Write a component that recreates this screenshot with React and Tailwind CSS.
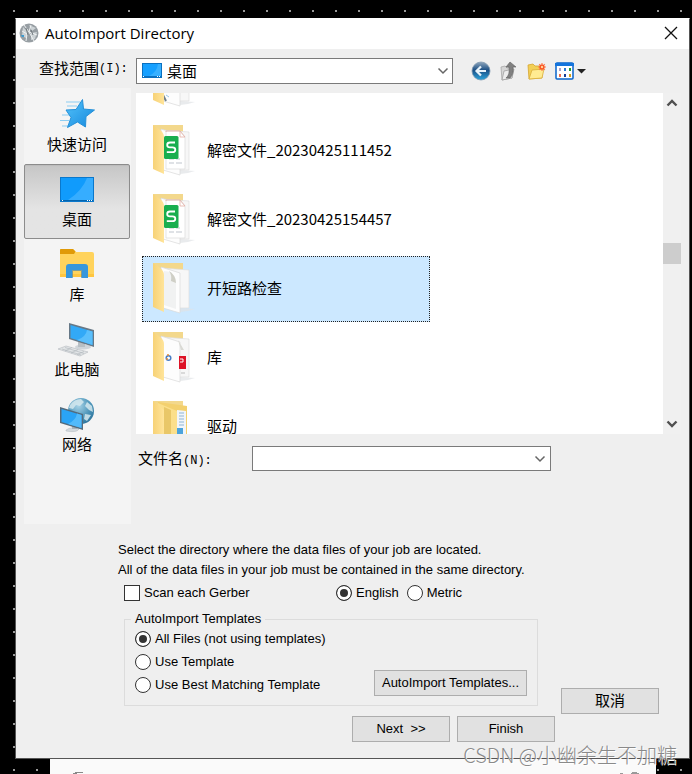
import { useState } from 'react';

const StarIcon = () => (
  <svg width="38" height="36" viewBox="0 0 38 36">
    <defs>
      <linearGradient id="star" x1="0" y1="0" x2="1" y2="1">
        <stop offset="0" stopColor="#55c4fb" />
        <stop offset="1" stopColor="#1487dc" />
      </linearGradient>
    </defs>
    <path d="M8 4H22M9 8H19M4 17H11M2 22.500H11M4 28H10" stroke="#8ccdf2" strokeWidth="1" />
    <path d="M24.500 1.500L25.500 11L36.500 12L28 18.500L27.500 29L19.500 24L9.500 29.500L13 19.500L8 12L18 11.500Z" fill="url(#star)" stroke="#2590d8" strokeWidth="1" strokeLinejoin="round" />
  </svg>
);

const DesktopIcon = () => (
  <svg width="38" height="36" viewBox="0 0 38 36">
    <rect x="2" y="4" width="34" height="25" fill="#0a78cc" />
    <rect x="3" y="5" width="32" height="22" fill="#109bfc" />
    <path d="M35 5V27H10Q24 18 29 5Z" fill="#36adff" />
    <rect x="3" y="27" width="32" height="1" fill="#0564ad" />
    <path d="M4 27.500H5M29 27.500H30M31 27.500H32M33 27.500H34" stroke="#fff" />
  </svg>
);

const LibraryIcon = () => (
  <svg width="38" height="36" viewBox="0 0 38 36">
    <path d="M2 2Q2 1 3 1H15L18 4H34Q36 4 36 6V29H2Z" fill="#ffd35c" />
    <path d="M2 2Q2 1 3 1H15L17.500 3.500L16 6H2Z" fill="#e09a08" />
    <path d="M2 26H36V29H2Z" fill="#ffc640" />
    <path d="M8 30V19Q8 16 11 16H27Q30 16 30 19V30H24V22H14V30Z" fill="#3797dc" />
    <path d="M14 30V22H24V30H23V23H15V30Z" fill="#2c79b9" opacity=".6" />
  </svg>
);

const ComputerIcon = () => (
  <svg width="38" height="36" viewBox="0 0 38 36">
    <ellipse cx="25" cy="24" rx="8" ry="2.500" fill="#cfd5da" />
    <path d="M20 18H27V24H20Z" fill="#b8bfc4" />
    <path d="M11 0L36 7V24L11 16Z" fill="#667887" />
    <path d="M12.500 2L34.500 8.500V22L12.500 15Z" fill="#32a9f7" />
    <path d="M34.500 8.500V22L19 17Q28 14 29 7Z" fill="#5abffc" />
    <path d="M0 26L8 23L30 29L22 33Z" fill="#e2e5e7" stroke="#b4b9bd" strokeWidth=".6" />
    <path d="M4 26L23 32M7 24.500L26 30.500M7 28L14 24.500M13 30L20 26.500M19 31.500L26 28.500" stroke="#adb3b8" strokeWidth=".6" />
  </svg>
);

const NetworkIcon = () => (
  <svg width="38" height="36" viewBox="0 0 38 36">
    <defs>
      <radialGradient id="globe" cx=".4" cy=".3" r=".8">
        <stop offset="0" stopColor="#a8d3e6" />
        <stop offset=".6" stopColor="#4a93b8" />
        <stop offset="1" stopColor="#286d95" />
      </radialGradient>
    </defs>
    <circle cx="23" cy="13" r="13" fill="url(#globe)" />
    <path d="M12 7Q16 1 23 1L26 4L22 8L18 7L15 11L11 10ZM29 4L34 8L35 14L31 12L27 8ZM27 16L33 17L29 23L26 21Z" fill="#d5e9ee" opacity=".85" />
    <path d="M8 32Q14 28 21 31Q19 35 8 33Z" fill="#d3d9dd" stroke="#b0b8be" strokeWidth=".5" />
    <path d="M14 26H19V31H14Z" fill="#a9b2b9" />
    <path d="M2 9L25 16V32L2 25Z" fill="#546b7c" />
    <path d="M3.500 11L23.500 17V30L3.500 24Z" fill="#2aa4f6" />
    <path d="M23.500 17V30L10 26Q18 22 19 15.500Z" fill="#52bafa" />
  </svg>
);

// Folder thumbnail, the type decides what sheet sticks out of it
const FolderThumb = ({ type }) => (
  <svg width="44" height="54" viewBox="0 0 44 54" className="shrink-0">
    <defs>
      <linearGradient id="flap" x1="0" y1="0" x2="1" y2="0">
        <stop offset="0" stopColor="#f7d277" />
        <stop offset="1" stopColor="#ffe49a" />
      </linearGradient>
    </defs>
    <path d="M28 47L43 48L36 50L28 51Z" fill="#dfe3e6" opacity=".7" />
    <path d="M1 2H31V40L10 45Z" fill="#f3d88c" />
    {type === 'nested' ? (
      <>
        <path d="M6 3L35 7V52H8Z" fill="#f3d06e" />
        <path d="M25 11L34 12V50H25Z" fill="#f1f5f9" />
        <path d="M27 14H32M27 17H32M27 20H32M27 23H32M27 26H32" stroke="#8fb5d6" />
        <path d="M25 29H31V42H25Z" fill="#4ba3dc" />
        <path d="M6 4L25 12V52H6Z" fill="#fbdf8b" />
        <path d="M12 8L19 11V52H12Z" fill="#e9c768" />
        <path d="M1 2L12 11V52L1 48Z" fill="url(#flap)" />
      </>
    ) : (
      <>
        <path d="M9 7L37 9V47H28L12 42Z" fill="#f7f7f7" stroke="#dedede" strokeWidth=".7" />
        <path d="M9 6L28 12V52L11 47Z" fill="#fdfdfd" stroke="#d8d8d8" strokeWidth=".7" />
      </>
    )}
    {type === 'sheet' && (
      <>
        <path d="M14 8H28L33 14V46H14Z" fill="#fff" stroke="#dadada" strokeWidth=".7" />
        <path d="M14 9V8H28L33 14M28 8V14H33" fill="none" stroke="#e4afa5" strokeWidth=".8" />
        <path d="M17 36H22M24 36H28M17 40H22M24 40H30" stroke="#d5d9de" strokeWidth="1.500" />
      </>
    )}
    {type === 'pages' && (
      <>
        <path d="M12 10L19 11L24 20V48L12 44Z" fill="#f1f2f2" />
        <path d="M17 10Q20 14 19 20L24 22Q24 14 17 10Z" fill="#cfcfc6" />
      </>
    )}
    {type === 'pdf' && (
      <>
        <path d="M27 26H34V39H27Z" fill="#dd1327" />
        <path d="M28 29H31V32H28" fill="none" stroke="#fff" />
        <path d="M29 43H33" stroke="#bbb" />
        <circle cx="16.500" cy="28" r="2.300" fill="none" stroke="#4a7ec4" strokeWidth="1.500" />
        <path d="M15 25H17M14 29H16" stroke="#e08a3a" strokeWidth="1.300" />
        <path d="M26 10L32 20L29 20Z" fill="#d9d9d4" />
      </>
    )}
    {type === 'mixed' && (
      <>
        <path d="M11 41L14 47" stroke="#71818b" strokeWidth="2" />
        <path d="M14 41L17 43" stroke="#9ac6e8" />
      </>
    )}
    {type !== 'nested' && <path d="M1 2L8 7Q12 10 12 14V51L1 46Z" fill="url(#flap)" />}
    {type === 'sheet' && (
      <>
        <rect x="12" y="13" width="14.500" height="23" rx="1.500" fill="#19ae4f" />
        <path d="M23 19.500H18Q15.200 19.500 15.200 21.900Q15.200 24.300 18 24.300H20.500Q23.300 24.300 23.300 26.700Q23.300 29.200 20.500 29.200H14.800" fill="none" stroke="#fff" strokeWidth="1.800" />
      </>
    )}
  </svg>
);

const BackIcon = () => (
  <svg width="20" height="20" viewBox="0 0 20 20">
    <defs>
      <linearGradient id="back" x1="0" y1="0" x2="0" y2="1">
        <stop offset="0" stopColor="#8ea5bb" />
        <stop offset=".45" stopColor="#1b4f85" />
        <stop offset="1" stopColor="#2ba4dc" />
      </linearGradient>
    </defs>
    <circle cx="10" cy="10" r="9" fill="url(#back)" stroke="#7d98b0" strokeWidth=".8" />
    <path d="M15 10H6M10 5.500L5.500 10L10 14.500" fill="none" stroke="#e8f3fa" strokeWidth="2.200" />
  </svg>
);

const UpIcon = () => (
  <svg width="20" height="20" viewBox="0 0 20 20">
    <path d="M2 6L6 5L8 7L13 6V17L3 19Z" fill="#d6d6d6" stroke="#a8a8a8" strokeWidth=".8" />
    <path d="M3 19L5 10L15 8L13 17Z" fill="#ececec" stroke="#a0a0a0" strokeWidth=".8" />
    <path d="M7 17Q11 14 10 6H7L11 1L17 6H14Q15 13 11 17Z" fill="#808080" stroke="#606060" strokeWidth=".6" />
  </svg>
);

const NewFolderIcon = () => (
  <svg width="20" height="20" viewBox="0 0 20 20">
    <path d="M1 4L6 3L8 5L15 5V17L2 18Z" fill="#f2cf55" stroke="#d5a52e" strokeWidth=".8" />
    <path d="M2 18L5 9L17 8L15 17Z" fill="#ffeb91" stroke="#d9ad39" strokeWidth=".8" />
    <path d="M15 2V10M11 6H19M12.200 3.200L17.800 8.800M17.800 3.200L12.200 8.800" stroke="#ff7d50" strokeWidth="1.200" />
    <circle cx="15" cy="6" r="2.600" fill="#fa5423" />
    <circle cx="15" cy="6" r="1.200" fill="#ffd39a" />
  </svg>
);

const ViewIcon = () => (
  <svg width="32" height="20" viewBox="0 0 32 20">
    <rect x="1" y="2" width="17" height="16" rx="1" fill="#fff" stroke="#0864cb" strokeWidth="1.500" />
    <path d="M0 2H19V5H0Z" fill="#1474dc" />
    <path d="M4 7H6V10H4Z" fill="#aaa0cb" />
    <path d="M9 7H11V10H9Z" fill="#2d79d1" />
    <path d="M14 7H16V10H14Z" fill="#229a32" />
    <path d="M4 13H6V16H4Z" fill="#ed6b4b" />
    <path d="M9 13H11V16H9Z" fill="#163e95" />
    <path d="M14 13H16V16H14Z" fill="#d7a01b" />
    <path d="M22 8H31L26.500 12.500Z" fill="#222" />
  </svg>
);

const AppIcon = () => (
  <svg width="20" height="20" viewBox="0 0 20 20">
    <circle cx="10" cy="10" r="9.500" fill="#979ea3" />
    <path d="M4 4L9 9L7 15L3 13ZM10 2L17 5L13 8ZM12 10L18 9L16 16L12 17Z" fill="#cdd3d6" />
    <path d="M5 2L10 9L15 18M3 8L8 11L7 18M12 2L10 9L18 12" fill="none" stroke="#eef1f2" strokeWidth="1" />
    <path d="M7 5L9 12M12 7L14 12" stroke="#70787d" />
    <path d="M2 12H5V14H3Z" fill="#3f9bd0" />
  </svg>
);

const Chevron = ({ up, bold }) => (
  <svg width="12" height="8" viewBox="0 0 12 8" className={up ? 'rotate-180' : ''}>
    <path d="M1.500 1.500L6 6L10.500 1.500" fill="none" stroke={bold ? '#505050' : '#666'} strokeWidth={bold ? 2.4 : 1.5} />
  </svg>
);

const places = [
  { label: '快速访问', icon: <StarIcon /> },
  { label: '桌面', icon: <DesktopIcon /> },
  { label: '库', icon: <LibraryIcon /> },
  { label: '此电脑', icon: <ComputerIcon /> },
  { label: '网络', icon: <NetworkIcon /> },
];

const files = [
  { name: '', type: 'mixed' },
  { name: '解密文件_20230425111452', type: 'sheet' },
  { name: '解密文件_20230425154457', type: 'sheet' },
  { name: '开短路检查', type: 'pages' },
  { name: '库', type: 'pdf' },
  { name: '驱动', type: 'nested' },
];

const Radio = ({ label, ...props }) => (
  <label className="flex items-center gap-1">
    <input
      type="radio"
      className="h-4 w-4 appearance-none rounded-full border border-[#333] bg-white checked:bg-[#333] checked:shadow-[inset_0_0_0_3px_white]"
      {...props}
    />
    {label}
  </label>
);

const PushButton = ({ children, className = '' }) => (
  <button type="button" className={`h-[26px] border border-[#adadad] bg-[#e1e1e1] whitespace-pre ${className}`}>
    {children}
  </button>
);

export default function App() {
  const [place, setPlace] = useState('桌面');
  const [selected, setSelected] = useState(3);
  const [unit, setUnit] = useState('English');
  const [template, setTemplate] = useState('all');

  return (
    <div className="relative flex min-h-screen flex-col overflow-hidden bg-black bg-[radial-gradient(circle_at_14px_11px,#999_0_1px,transparent_1px)] bg-size-[23px_23px] pt-[18px] text-black">
      <main className="relative mr-0.5 ml-[15px] border border-[#555] border-t-white bg-[#efefef] pb-4 font-['Liberation_Sans','Noto_Sans_CJK_SC',sans-serif] text-[13px]">
        {/* Title bar */}
        <header className="flex h-[30px] items-center bg-white pr-[11px] pb-0.5 pl-[3px]">
          <AppIcon />
          <h1 className="ml-1.5 flex-1 font-['Open_Sans',sans-serif] text-[15px]">AutoImport Directory</h1>
          <button type="button" aria-label="Close">
            <svg width="14" height="14" viewBox="0 0 14 14">
              <path d="M1 1L13 13M13 1L1 13" stroke="#111" strokeWidth="1.300" />
            </svg>
          </button>
        </header>

        {/* Look in row */}
        <div className="flex h-[39px] items-end pb-1 pl-[23px]">
          <label htmlFor="look-in" className="flex h-[30px] w-[97px] items-center text-[15px]">
            查找范围<span className="font-['Liberation_Mono',monospace] text-[12px]">(I):</span>
          </label>
          <div className="relative w-[317px]">
            <select id="look-in" className="block h-[26px] w-full appearance-none border border-[#7a7a7a] bg-white pl-[30px] font-['Noto_Sans_CJK_SC',sans-serif] text-[15px]">
              <option>桌面</option>
            </select>
            <span className="pointer-events-none absolute inset-y-0 left-1.5 flex items-center">
              <svg width="20" height="16" viewBox="0 0 20 16">
                <rect width="20" height="15" fill="#0a70c0" />
                <rect x="1" y="1" width="18" height="12" fill="#16a0ff" />
                <path d="M19 1V13H7Q15 9 16 1Z" fill="#38b0ff" />
                <path d="M1 13.500H2M15 13.500H16M17 13.500H18" stroke="#fff" />
              </svg>
            </span>
            <span className="pointer-events-none absolute inset-y-0 right-1 flex items-center">
              <Chevron />
            </span>
          </div>
          <div className="ml-[18px] flex h-[26px] items-center gap-2">
            <button type="button" aria-label="Back"><BackIcon /></button>
            <button type="button" aria-label="Up one level"><UpIcon /></button>
            <button type="button" aria-label="New folder"><NewFolderIcon /></button>
            <button type="button" aria-label="View"><ViewIcon /></button>
          </div>
        </div>

        <div className="flex gap-[5px] pr-2 pl-2 font-['Noto_Sans_CJK_SC',sans-serif] text-[15px]">
          {/* Places bar */}
          <nav className="flex h-[436px] w-[107px] shrink-0 flex-col bg-[#f4f4f4] pt-px pr-px">
            {places.map((p) => (
              <button
                key={p.label}
                type="button"
                onClick={() => setPlace(p.label)}
                className={`flex h-[75px] w-full flex-col items-center rounded-xs border pt-2 leading-5 ${
                  place === p.label
                    ? 'border-[#8c8c8c] bg-linear-to-b from-[#c6c6c6] to-[#e4e4e4] to-60% inset-shadow-xs'
                    : 'border-transparent'
                }`}
              >
                {p.icon}
                {p.label}
              </button>
            ))}
          </nav>

          <div className="min-w-0 flex-1 pt-[5px]">
            <div className="flex h-[341px]">
              {/* File list */}
              <div className="flex-1 overflow-hidden bg-white pl-1.5">
                <ul className="-mt-11 flex w-[288px] flex-col gap-[3px]">
                  {files.map((f, i) => (
                    <li key={i}>
                      <button
                        type="button"
                        aria-label={f.name || 'Folder'}
                        onClick={() => setSelected(i)}
                        className={`flex h-[66px] w-full items-center gap-[11px] border border-dotted pb-0.5 pl-[9px] text-left leading-4 ${
                          selected === i ? 'border-[#222] bg-[#cce8ff]' : 'border-transparent'
                        }`}
                      >
                        <FolderThumb type={f.type} />
                        {f.name}
                      </button>
                    </li>
                  ))}
                </ul>
              </div>
              {/* Scrollbar */}
              <div className="flex w-[18px] flex-col items-center bg-[#f0f0f0]">
                <button type="button" aria-label="Scroll up" className="flex h-5 items-center"><Chevron up bold /></button>
                <div className="flex w-full flex-1 flex-col pt-[130px]">
                  <div className="h-[21px] bg-[#cdcdcd]" />
                </div>
                <button type="button" aria-label="Scroll down" className="flex h-5 items-center"><Chevron bold /></button>
              </div>
            </div>

            {/* File name row */}
            <div className="mt-3 flex items-center pl-0.5">
              <label htmlFor="file-name" className="w-[114px]">
                文件名<span className="font-['Liberation_Mono',monospace] text-[12px]">(N):</span>
              </label>
              <div className="flex h-[25px] w-[299px] items-center border border-[#7a7a7a] bg-white">
                <input id="file-name" type="text" className="h-full min-w-0 flex-1 px-1 outline-none" />
                <button type="button" aria-label="Recent names" className="px-1"><Chevron /></button>
              </div>
            </div>
          </div>
        </div>

        {/* Import options */}
        <div className="mt-4 flex items-end pl-[102px]">
          <div className="w-[420px] pb-2">
            <p className="leading-5 whitespace-nowrap">Select the directory where the data files of your job are located.</p>
            <p className="leading-5 whitespace-nowrap">All of the data files in your job must be contained in the same directory.</p>
            <div className="flex h-[26px] items-center pl-1.5">
              <label className="flex w-[212px] items-center gap-1">
                <input type="checkbox" className="h-4 w-4 appearance-none border border-[#333] bg-white checked:bg-[#333] checked:shadow-[inset_0_0_0_3px_white]" />
                Scan each Gerber
              </label>
              <div className="flex gap-2">
                <Radio label="English" name="unit" checked={unit === 'English'} onChange={() => setUnit('English')} />
                <Radio label="Metric" name="unit" checked={unit === 'Metric'} onChange={() => setUnit('Metric')} />
              </div>
            </div>
            <fieldset className="mt-[5px] ml-1.5 border border-[#dcdcdc] px-2.5 pb-[9px]">
              <legend className="-ml-1 px-1 leading-4">AutoImport Templates</legend>
              <div className="flex items-end justify-between">
                <div className="grid auto-rows-[23px]">
                  <Radio label="All Files (not using templates)" name="template" checked={template === 'all'} onChange={() => setTemplate('all')} />
                  <Radio label="Use Template" name="template" checked={template === 'use'} onChange={() => setTemplate('use')} />
                  <Radio label="Use Best Matching Template" name="template" checked={template === 'best'} onChange={() => setTemplate('best')} />
                </div>
                <PushButton className="w-[153px]">AutoImport Templates...</PushButton>
              </div>
            </fieldset>
          </div>
          <PushButton className="ml-[23px] w-[98px] text-[15px]">取消</PushButton>
        </div>
        <div className="mt-0.5 flex gap-[7px] pl-[336px]">
          <PushButton className="w-[98px]">{'Next  >>'}</PushButton>
          <PushButton className="w-[98px]">Finish</PushButton>
        </div>
      </main>

      {/* Window behind the dialog */}
      <div className="mr-9 ml-[50px] flex min-h-[15px] flex-1 items-end justify-between bg-[#fafafa] pr-4 pl-[23px]">
        <svg width="12" height="2" viewBox="0 0 12 2">
          <path d="M2 .5H10M0 1.500H4" stroke="#888" />
        </svg>
        <svg width="20" height="2" viewBox="0 0 20 2">
          <path d="M0 1.500H3M12 .5H17M11 1.500H19" stroke="#999" />
        </svg>
      </div>
      <div className="h-px bg-white" />

      <span className="absolute right-[15px] bottom-1 font-['Noto_Sans_CJK_SC',sans-serif] text-[20px] leading-8 font-light whitespace-nowrap text-[#8a8a8a] [text-shadow:1px_1px_0_#fff]">
        CSDN @小幽余生不加糖
      </span>
    </div>
  );
}
